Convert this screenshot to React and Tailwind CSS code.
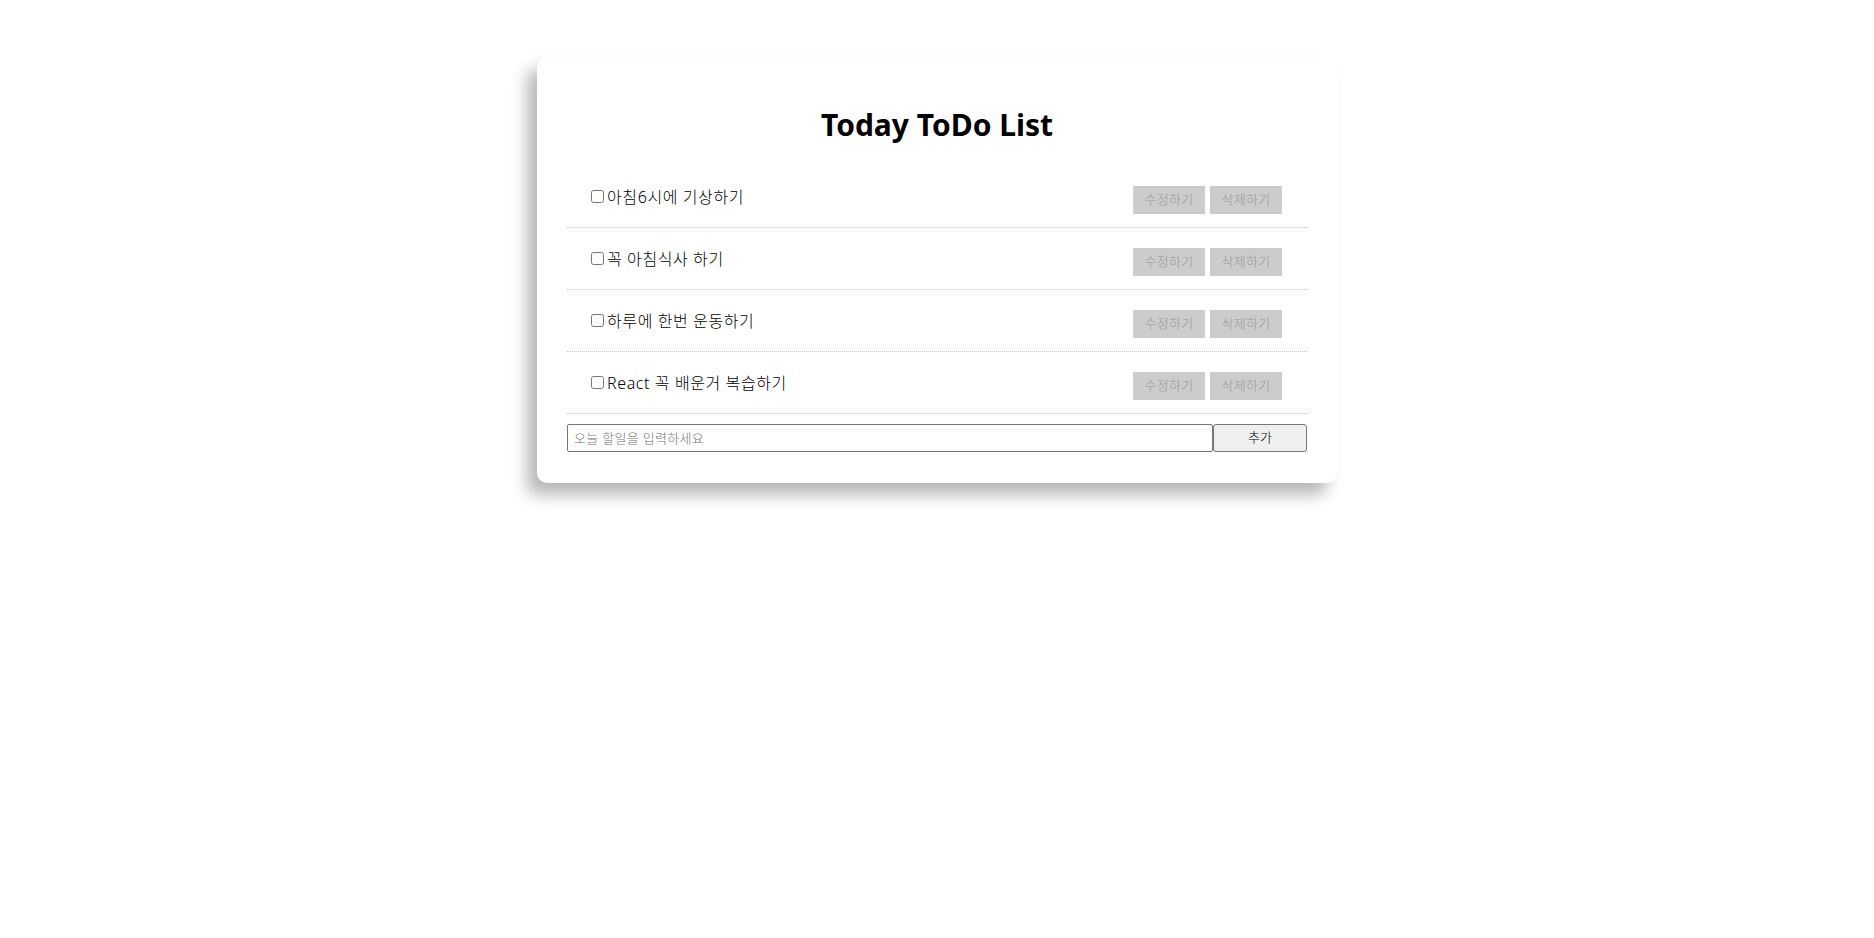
import React, { useState } from 'react';

// Initial todo items
const initialTodos = [
  { id: 1, text: '아침6시에 기상하기', done: false },
  { id: 2, text: '꼭 아침식사 하기', done: false },
  { id: 3, text: '하루에 한번 운동하기', done: false },
  { id: 4, text: 'React 꼭 배운거 복습하기', done: false },
];

const fontStack = 'font-["Noto_Sans","Noto_Sans_CJK_KR",sans-serif]';

function TodoItem({ todo, onToggle, onDelete }) {
  return (
    <li className="flex h-[62px] items-center justify-between border-b border-dotted border-[#c8c8c8] pl-5 pr-[25px]">
      <label className="flex items-center text-[16px] font-light tracking-[0.6px] text-black">
        <input
          type="checkbox"
          checked={todo.done}
          onChange={() => onToggle(todo.id)}
          className="mt-[3px] mr-[3px] mb-[3px] ml-1 h-[13px] w-[13px]"
        />
        <span>{todo.text}</span>
      </label>
      <div className="mt-[6px] flex gap-[5px]">
        <button className="h-[28px] w-[72px] bg-[#cccccc] text-[13px] font-light tracking-[0.3px] text-[#999999]">수정하기</button>
        <button
          onClick={() => onDelete(todo.id)}
          className="h-[28px] w-[72px] bg-[#cccccc] text-[13px] font-light tracking-[0.3px] text-[#999999]"
        >
          삭제하기
        </button>
      </div>
    </li>
  );
}

export default function App() {
  const [todos, setTodos] = useState(initialTodos);
  const [input, setInput] = useState('');

  const handleToggle = (id) =>
    setTodos((prev) => prev.map((t) => (t.id === id ? { ...t, done: !t.done } : t)));

  const handleDelete = (id) => setTodos((prev) => prev.filter((t) => t.id !== id));

  const handleAdd = (e) => {
    e.preventDefault();
    if (!input.trim()) return;
    setTodos((prev) => [...prev, { id: Date.now(), text: input.trim(), done: false }]);
    setInput('');
  };

  return (
    <div className={`min-h-[938px] w-full bg-white pt-[57px] ${fontStack}`}>
      <div className="mx-auto w-[800px] rounded-[10px] bg-white px-[30px] pt-[48px] pb-[31px] shadow-[-10px_12px_16px_rgba(0,0,0,0.28)]">
        {/* Title */}
        <h1 className="h-[40px] text-center text-[30px] leading-[40px] font-bold text-black">Today ToDo List</h1>

        {/* Todo list */}
        <ul className="mt-[21px]">
          {todos.map((todo) => (
            <TodoItem key={todo.id} todo={todo} onToggle={handleToggle} onDelete={handleDelete} />
          ))}
        </ul>

        {/* Add form */}
        <form onSubmit={handleAdd} className="mt-[10px] flex">
          <input
            value={input}
            onChange={(e) => setInput(e.target.value)}
            placeholder="오늘 할일을 입력하세요"
            className="h-[28px] flex-1 rounded-[2px] border border-[#767676] px-[6px] text-[13px] font-light tracking-[0.3px] text-black placeholder:text-[#757575] outline-none"
          />
          <button
            type="submit"
            className="h-[28px] w-[94px] rounded-[3px] border border-[#767676] bg-[#efefef] text-[13px] font-light text-black"
          >
            추가
          </button>
        </form>
      </div>
    </div>
  );
}
